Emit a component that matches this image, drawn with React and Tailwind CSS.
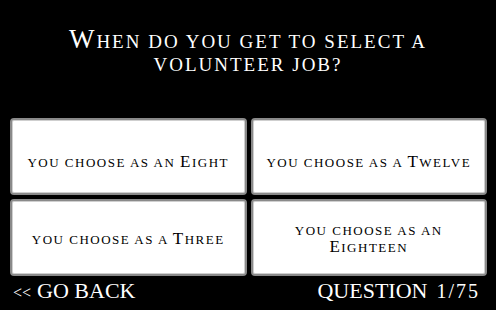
function SC({ text, small }) {
  const parts = [];
  let buf = "";
  let isSmall = null;
  const flush = (k) => {
    if (buf) {
      parts.push(
        isSmall ? (
          <span key={k} className={small}>{buf.toUpperCase()}</span>
        ) : (
          <span key={k}>{buf}</span>
        )
      );
    }
    buf = "";
  };
  [...text].forEach((ch, i) => {
    const s = ch === ch.toLowerCase();
    if (isSmall !== null && s !== isSmall) flush(i);
    isSmall = s;
    buf += ch;
  });
  flush("end");
  return <>{parts}</>;
}

export default function App() {
  const serif = { fontFamily: '"Liberation Serif", "Times New Roman", serif' };
  const btn =
    "flex items-center justify-center text-center bg-white rounded-[4px] border-2 border-[#8a8a8a] shadow-[inset_0_0_0_1px_#cfcfcf] text-black text-[17px] tracking-[1.5px]";
  const bs = "text-[13px]";
  return (
    <div className="w-[496px] h-[310px] bg-black flex flex-col overflow-hidden" style={serif}>
      <div className="h-[118px] pt-[28px] flex flex-col items-center text-white text-[27px] tracking-[2px]">
        <div className="h-[23px] leading-[23px]">
          <SC text="When do you get to select a" small="text-[19px]" />
        </div>
        <div className="h-[23px] leading-[23px]">
          <SC text="volunteer job?" small="text-[19px]" />
        </div>
      </div>
      <div className="grid grid-cols-2 grid-rows-2 gap-[4px] pl-[10px] pr-[9px] h-[158px]">
        <div className={btn + " pt-[12px]"}>
          <div className="leading-[16px]"><SC text="you choose as an Eight" small={bs} /></div>
        </div>
        <div className={btn + " pt-[12px]"}>
          <div className="leading-[16px]"><SC text="you choose as a Twelve" small={bs} /></div>
        </div>
        <div className={btn + " pt-[4px]"}>
          <div className="leading-[16px]"><SC text="you choose as a Three" small={bs} /></div>
        </div>
        <div className={btn + " pt-[2px] flex-col"}>
          <div className="leading-[16px]"><SC text="you choose as an" small={bs} /></div>
          <div className="leading-[16px]"><SC text="Eighteen" small={bs} /></div>
        </div>
      </div>
      <div className="flex-1 flex items-end justify-between pl-[13px] pr-[16px] pb-[8px] text-white">
        <div className="flex items-baseline gap-[6px]">
          <span className="text-[16px] leading-none">&lt;&lt;</span>
          <span className="text-[22px] leading-none">GO BACK</span>
        </div>
        <div className="flex items-baseline gap-[9px]">
          <span className="text-[22px] leading-none">QUESTION</span>
          <span className="text-[20px] leading-none tracking-[2px]">1/75</span>
        </div>
      </div>
    </div>
  );
}
